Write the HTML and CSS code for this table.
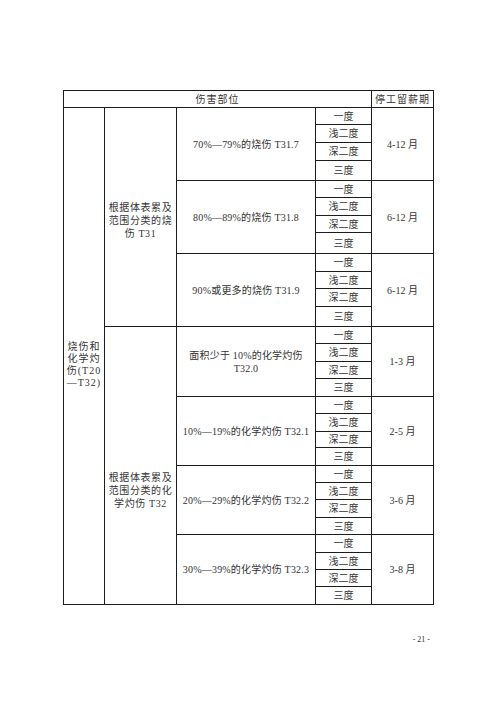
FILE: index.html
```html
<!DOCTYPE html>
<html lang="zh">
<head>
<meta charset="utf-8">
<link rel="stylesheet" href="styles.css">
</head>
<body>
<div class="page">
<table class="grid">
<colgroup><col class="c1"><col class="c2"><col class="c3"><col class="c4"><col class="c5"></colgroup>
<tr class="h17 head"><td colspan="4">伤害部位</td><td>停工留薪期</td></tr>
<tr class="h17"><td rowspan="28" class="cat"><div class="cat-in">烧伤和<br>化学灼<br>伤(T20<br>—T32)</div></td><td rowspan="12" class="sub sub1">根据体表累及<br>范围分类的烧<br>伤 T31</td><td rowspan="4" class="desc">70%—79%的烧伤 T31.7</td><td>一度</td><td rowspan="4">4-12 月</td></tr>
<tr class="h18"><td>浅二度</td></tr>
<tr class="h18"><td>深二度</td></tr>
<tr class="h20"><td>三度</td></tr>
<tr class="h17"><td rowspan="4" class="desc">80%—89%的烧伤 T31.8</td><td>一度</td><td rowspan="4">6-12 月</td></tr>
<tr class="h18"><td>浅二度</td></tr>
<tr class="h17"><td>深二度</td></tr>
<tr class="h21"><td>三度</td></tr>
<tr class="h18"><td rowspan="4" class="desc">90%或更多的烧伤 T31.9</td><td>一度</td><td rowspan="4">6-12 月</td></tr>
<tr class="h17"><td>浅二度</td></tr>
<tr class="h18"><td>深二度</td></tr>
<tr class="h20"><td>三度</td></tr>
<tr class="h17"><td rowspan="16" class="sub sub2">根据体表累及<br>范围分类的化<br>学灼伤 T32</td><td rowspan="4" class="desc">面积少于 10%的化学灼伤<br>T32.0</td><td>一度</td><td rowspan="4">1-3 月</td></tr>
<tr class="h18"><td>浅二度</td></tr>
<tr class="h17"><td>深二度</td></tr>
<tr class="h18"><td>三度</td></tr>
<tr class="h17"><td rowspan="4" class="desc">10%—19%的化学灼伤 T32.1</td><td>一度</td><td rowspan="4">2-5 月</td></tr>
<tr class="h18"><td>浅二度</td></tr>
<tr class="h16"><td>深二度</td></tr>
<tr class="h18"><td>三度</td></tr>
<tr class="h17"><td rowspan="4" class="desc">20%—29%的化学灼伤 T32.2</td><td>一度</td><td rowspan="4">3-6 月</td></tr>
<tr class="h17"><td>浅二度</td></tr>
<tr class="h18"><td>深二度</td></tr>
<tr class="h17"><td>三度</td></tr>
<tr class="h18"><td rowspan="4" class="desc">30%—39%的化学灼伤 T32.3</td><td>一度</td><td rowspan="4">3-8 月</td></tr>
<tr class="h17"><td>浅二度</td></tr>
<tr class="h17"><td>深二度</td></tr>
<tr class="h18"><td>三度</td></tr>
</table>
<div class="pageno">- 21 -</div>
</div>
</body>
</html>
```

FILE: styles.css
```css
html, body {
  margin: 0;
  padding: 0;
  background: #ffffff;
}
.page {
  width: 496px;
  height: 702px;
  box-sizing: border-box;
  padding: 90px 0 0 63px;
  font-family: "Liberation Serif", "Noto Sans CJK SC", serif;
  color: #333333;
}
.grid {
  border-collapse: collapse;
  table-layout: fixed;
  width: 370px;
  font-size: 10px;
  line-height: 13px;
}
.c1 { width: 41px; }
.c2 { width: 72px; }
.c3 { width: 139px; }
.c4 { width: 56px; }
.c5 { width: 62px; }
.grid td {
  border: 1px solid #1c1c1c;
  padding: 0;
  text-align: center;
  vertical-align: middle;
  overflow: hidden;
  white-space: nowrap;
}
.head td {
  letter-spacing: 1px;
}
.h16 { height: 16px; }
.h17 { height: 17px; }
.h18 { height: 18px; }
.h20 { height: 20px; }
.h21 { height: 21px; }
.desc {
  letter-spacing: 0.2px;
}
.sub {
  letter-spacing: 0.6px;
  line-height: 13px;
}
.sub1 {
  padding-top: 6px !important;
}
.sub2 {
  padding-top: 50px !important;
}
.cat {
  padding-top: 18px !important;
}
.cat-in {
  letter-spacing: 1px;
  line-height: 12px;
}
.pageno {
  margin-top: 30px;
  width: 367px;
  text-align: right;
  font-size: 8px;
  color: #333333;
}
```
